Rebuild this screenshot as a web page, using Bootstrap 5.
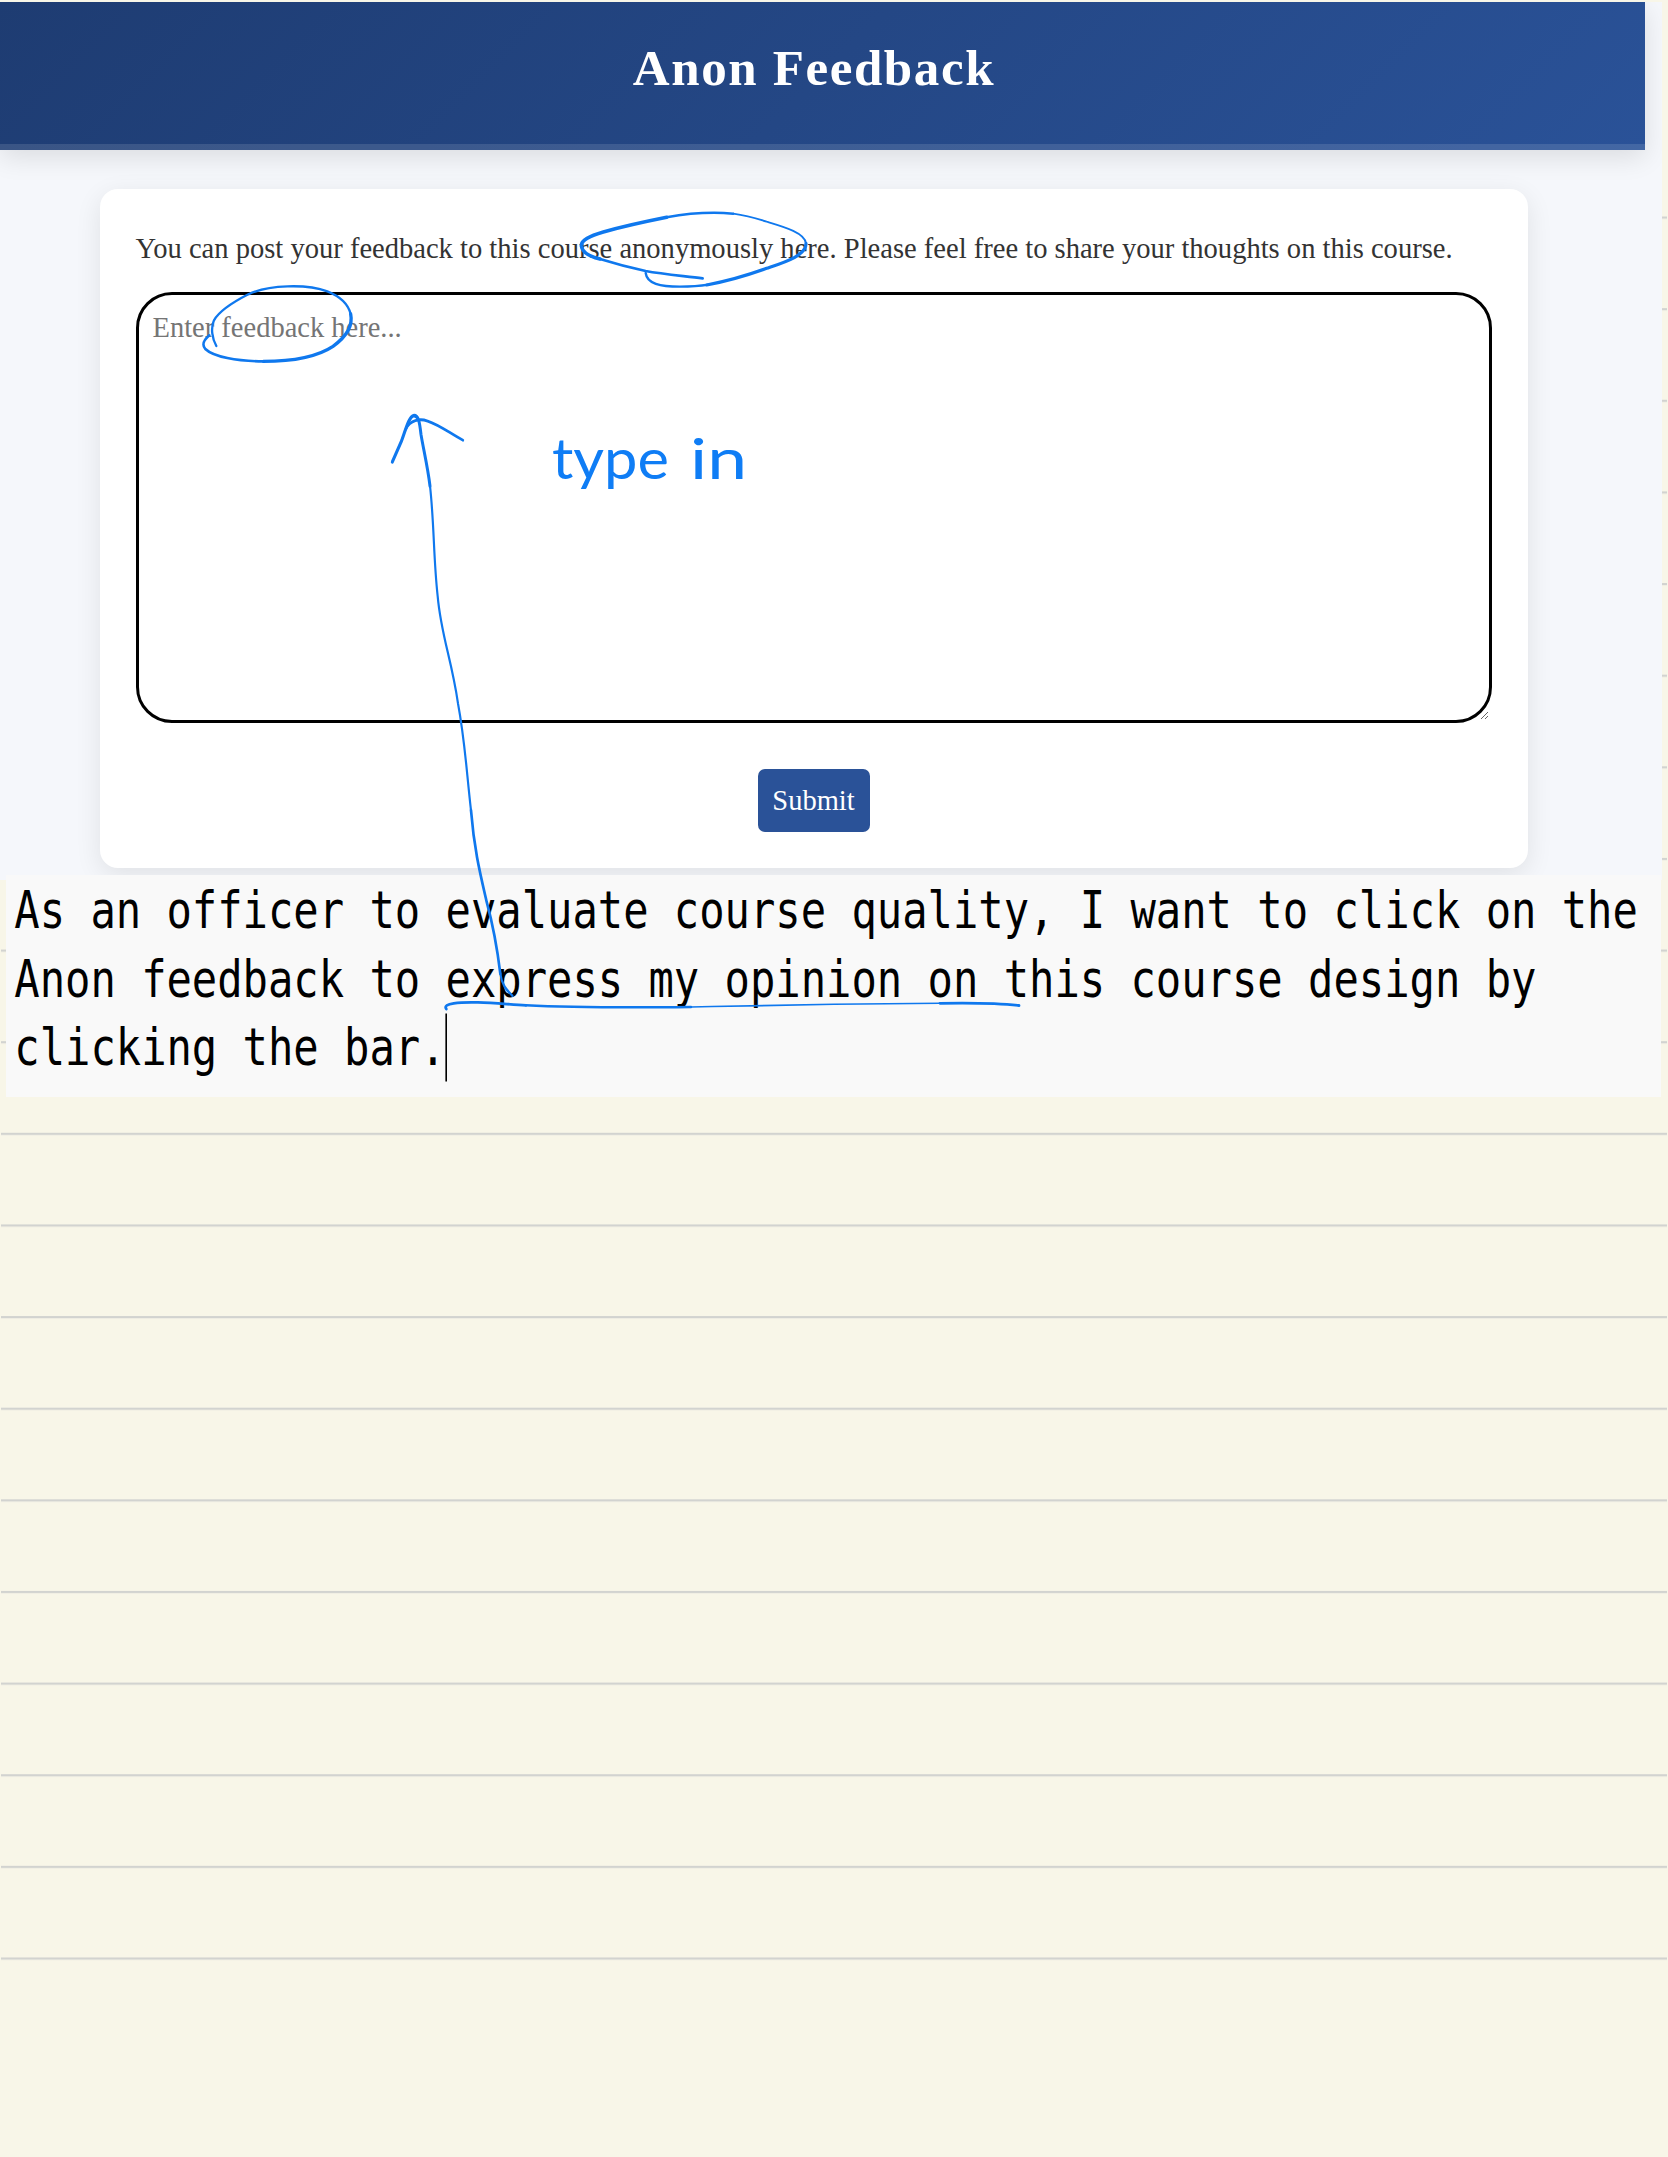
<!DOCTYPE html>
<html lang="en">
<head>
<meta charset="utf-8">
<title>Anon Feedback</title>
<link href="https://cdn.jsdelivr.net/npm/bootstrap@5.3.0/dist/css/bootstrap.min.css" rel="stylesheet">
<style>
body{background:#f8f6e8;font-family:"Liberation Serif",serif;overflow-x:hidden}
.paper{height:2157px;width:1668px;padding-top:2px;overflow:hidden}
.paper-rules{top:0;left:0;z-index:0}
.site{width:1662px;height:878px;background:#f5f7fb;z-index:1;overflow:hidden}
.site-head{width:1645px;height:148px;background:linear-gradient(135deg,#1e3c72,#2a5298);border-bottom:6px solid rgba(255,255,255,.12);background-origin:border-box;box-shadow:0 7px 25px rgba(0,0,0,.11);padding:37px 17px 0 0}
.site-head h1{font-size:51px;letter-spacing:1.6px;line-height:58px}
.feedback-card{width:1427.5px;height:679px;margin:39px 0 0 100px;border-radius:18px;padding:40px 36px 0 35.5px;box-shadow:0 7px 27px rgba(0,0,0,.09)}
.intro{font-size:28.55px;line-height:40px;color:#333;white-space:nowrap;margin-bottom:23px}
.feedback-box{width:1356px;height:431px;border:3px solid #000;border-radius:36px;padding:16px 14px;font-size:28.5px;line-height:34px;resize:both}
.feedback-box::placeholder{color:#757575;opacity:1}
.send{--bs-btn-bg:#2a5298;--bs-btn-color:#fff;width:112px;height:63px;font-size:28.5px;border:0;border-radius:7px;margin-top:46px;padding:2px 0 0}
.story{width:1655px;height:222px;margin-left:6px;margin-top:-5px;background:#f9f9f9;z-index:2;padding:0 0 0 8px}
.story-text{font-family:"DejaVu Sans Mono",monospace;font-size:52px;line-height:68.5px;color:#000;white-space:pre;transform:translate(.3px,.5px) scaleX(.8103);transform-origin:0 0;width:2030px}
.caret{display:inline-block;width:1.6px;height:68px;background:#000;vertical-align:top;margin-top:1px}
.ink{top:0;left:0;z-index:3;pointer-events:none}
.ink path{fill:none;stroke:#0f78ee;stroke-linecap:round;stroke-linejoin:round}
.ink text{fill:#0f7df5;font-family:Lato,sans-serif;font-size:56px}
</style>
</head>
<body>
<main class="paper position-relative d-flex flex-column">
  <svg class="paper-rules position-absolute" width="1668" height="2157" aria-hidden="true">
    <defs><pattern id="rule" patternUnits="userSpaceOnUse" x="0" y="216.5" width="1668" height="91.63"><rect x="1" y="0" width="1666" height="2.2" fill="#d2d3d0"/></pattern></defs>
    <rect y="216" width="1668" height="1750" fill="url(#rule)"/>
  </svg>
  <section class="site position-relative flex-shrink-0">
    <header class="site-head text-white text-center"><h1 class="fw-bold mb-0">Anon Feedback</h1></header>
    <form class="feedback-card bg-white text-center">
      <p class="intro text-start">You can post your feedback to this course anonymously here. Please feel free to share your thoughts on this course.</p>
      <textarea class="feedback-box d-block bg-white" placeholder="Enter feedback here..."></textarea>
      <button type="button" class="btn send">Submit</button>
    </form>
  </section>
  <section class="story position-relative flex-shrink-0"><div class="story-text">As an officer to evaluate course quality, I want to click on the
Anon feedback to express my opinion on this course design by
clicking the bar.<span class="caret"></span></div></section>
  <svg class="ink position-absolute" width="1668" height="2157">
    <!-- loop around "anonymously" -->
    <g transform="translate(500 190) scale(.33333)">
      <path stroke-width="7" d="M437 249C441 281 480 290 540 290C570 290 600 288 625 284"/>
      <path stroke-width="9.500" d="M620 285C690 272 745 255 800 235C850 218 920 197 918 160"/>
      <path stroke-width="5.500" d="M918 160C915 128 850 110 800 95C760 82 730 75 700 71"/>
      <path stroke-width="7.500" d="M700 71C640 66 560 71 500 82"/>
      <path stroke-width="10.500" d="M500 82C420 98 360 112 310 126C270 138 242 150 244 168C247 187 270 200 300 207"/>
      <path stroke-width="8" d="M300 207C345 221 390 233 437 243C490 253 555 258 608 265"/>
    </g>
    <!-- loop around "feedback" -->
    <g transform="translate(90 180) scale(.33333)">
      <path stroke-width="7" d="M379 498C367 477 361 444 372 421C388 393 432 365 475 343C535 314 650 311 712 334C750 349 775 374 782 402"/>
      <path stroke-width="10" d="M782 402C790 440 769 470 729 499C690 525 620 544 520 544"/>
      <path stroke-width="8" d="M520 544C440 544 370 530 346 507C336 495 338 483 358 466"/>
    </g>
    <!-- arrow -->
    <g transform="translate(370 390) scale(.33333 .40816)">
      <path stroke-width="9" d="M67 176L95 124C108 94 118 65 130 63C146 61 149 80 153 109C160 144 173 188 180 235"/>
      <path stroke-width="7" d="M108 95C121 74 148 69 173 76C210 86 240 106 279 123"/>
      <path stroke-width="6.500" d="M180 235C193 330 190 410 203 505C213 600 245 660 264 768C285 860 289 930 303 1030"/>
      <path stroke-width="8" d="M303 1030C313 1130 332 1190 350 1254C372 1320 382 1370 391 1430"/>
      <path stroke-width="6.500" d="M391 1430C395 1457 408 1468 427 1484"/>
    </g>
    <!-- underline -->
    <path stroke-width="2.800" d="M446.300 1009C442 1003 460 1002 478 1002.400C495 1002.800 510 1004.500 526 1005.300"/>
    <path stroke-width="2.400" d="M526 1005.300C570 1007.500 640 1007.500 691 1007"/>
    <path stroke-width="1.600" d="M691 1007C740 1006 790 1005 834 1004.300C870 1003.700 905 1003.500 940 1003.300"/>
    <path stroke-width="2.800" d="M940 1003.300C970 1002.800 998 1003 1019 1005.500"/>
    <text x="552" y="479" textLength="117" lengthAdjust="spacingAndGlyphs">type</text>
    <text x="690" y="479" textLength="57" lengthAdjust="spacingAndGlyphs">in</text>
  </svg>
</main>
<script src="https://cdn.jsdelivr.net/npm/bootstrap@5.3.0/dist/js/bootstrap.bundle.min.js"></script>
</body>
</html>
